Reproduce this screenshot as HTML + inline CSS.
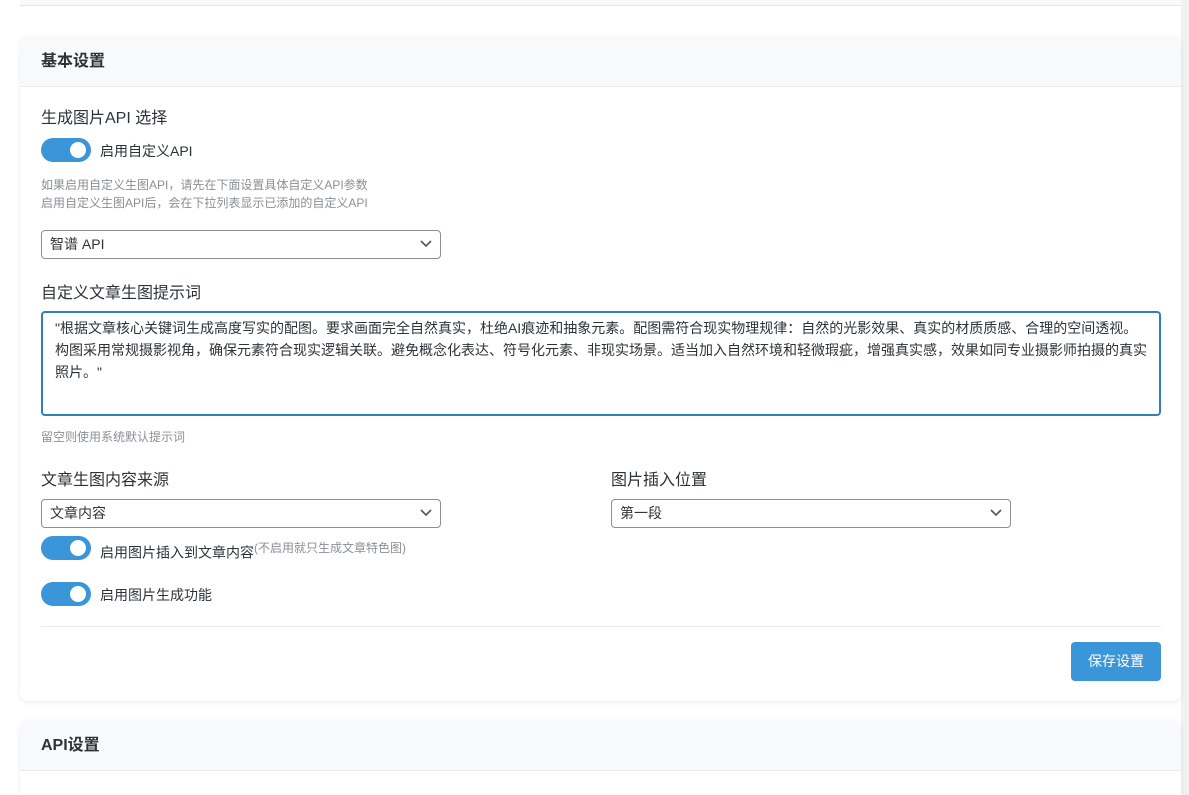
<!DOCTYPE html><html><head><meta charset="utf-8"><style>
html{height:795px;overflow:hidden}
body{margin:0;background:#f1f1f1;font-family:"Liberation Sans","Noto Sans CJK SC",sans-serif;color:#333;width:1189px;height:795px;overflow:hidden;position:relative}
.wrap{position:absolute;left:0;top:0;width:1181px;height:795px;background:#fff}
.top{position:absolute;left:20px;top:-10px;width:1161px;height:15px;border-bottom:1px solid #e3e5e8;background:#fafafa}
.card{position:absolute;left:20px;width:1161px;background:#fff;border-radius:8px;box-shadow:0 1px 6px rgba(0,0,0,.08);overflow:hidden}
.hd{height:49px;background:#f8f9fa;border-bottom:1px solid #e9ecef;padding-left:21px;line-height:49px;font-size:16px;font-weight:bold;color:#2c3338}
.a{position:absolute;white-space:nowrap}
.lab{font-size:16px;color:#2c3338}
.tg{width:50px;height:24px;border-radius:12px;background:#3a96d8}
.tg:after{content:"";position:absolute;right:5px;top:4px;width:16px;height:16px;border-radius:50%;background:#fff}
.tt{font-size:14px;color:#2c3338}
.hint{font-size:12px;color:#8a8f94;line-height:18px}
.sel{border:1px solid #8c8f94;border-radius:4px;font-size:14px;line-height:27px;padding-left:8px;box-sizing:border-box;height:29px}
.sel svg{position:absolute;right:8px;top:9px}
</style></head><body>
<div class="wrap"></div>
<div class="top"></div>
<div class="card" style="top:37px;height:664px">
<div class="hd">基本设置</div>
<div class="a lab" style="left:21px;top:67px">生成图片API 选择</div>
<div class="a tg" style="left:21px;top:101px"></div>
<div class="a tt" style="left:80px;top:104px">启用自定义API</div>
<div class="a hint" style="left:21px;top:139px">如果启用自定义生图API，请先在下面设置具体自定义API参数<br>启用自定义生图API后，会在下拉列表显示已添加的自定义API</div>
<div class="a sel" style="left:21px;top:193px;width:400px">智谱 API<svg width="12" height="8"><path d="M1 1l5 5 5-5" stroke="#555" stroke-width="1.6" fill="none"/></svg></div>
<div class="a lab" style="left:21px;top:242px">自定义文章生图提示词</div>
<div class="a" style="left:21px;top:274px;width:1120px;height:105px;border:2px solid #2f7fbf;border-radius:4px;box-sizing:border-box;padding:4px 12px;font-size:14px;line-height:22px;white-space:normal;color:#2c3338">"根据文章核心关键词生成高度写实的配图。要求画面完全自然真实，杜绝AI痕迹和抽象元素。配图需符合现实物理规律：自然的光影效果、真实的材质质感、合理的空间透视。构图采用常规摄影视角，确保元素符合现实逻辑关联。避免概念化表达、符号化元素、非现实场景。适当加入自然环境和轻微瑕疵，增强真实感，效果如同专业摄影师拍摄的真实照片。"</div>
<div class="a hint" style="left:21px;top:391px">留空则使用系统默认提示词</div>
<div class="a lab" style="left:21px;top:429px">文章生图内容来源</div>
<div class="a lab" style="left:591px;top:429px">图片插入位置</div>
<div class="a sel" style="left:21px;top:462px;width:400px">文章内容<svg width="12" height="8"><path d="M1 1l5 5 5-5" stroke="#555" stroke-width="1.6" fill="none"/></svg></div>
<div class="a sel" style="left:591px;top:462px;width:400px">第一段<svg width="12" height="8"><path d="M1 1l5 5 5-5" stroke="#555" stroke-width="1.6" fill="none"/></svg></div>
<div class="a tg" style="left:21px;top:499px"></div>
<div class="a tt" style="left:80px;top:502px">启用图片插入到文章内容<sup style="font-size:12px;color:#8a8f94">(不启用就只生成文章特色图)</sup></div>
<div class="a tg" style="left:21px;top:545px"></div>
<div class="a tt" style="left:80px;top:548px">启用图片生成功能</div>
<div class="a" style="left:21px;top:589px;width:1120px;border-top:1px solid #e5e7ea"></div>
<div class="a" style="left:1051px;top:605px;width:90px;height:39px;background:#3a96d8;border-radius:4px;color:#fff;font-size:14px;line-height:39px;text-align:center">保存设置</div>
</div>
<div class="card" style="top:721px;height:74px;border-radius:8px 8px 0 0">
<div class="hd">API设置</div>
</div>
</body></html>
